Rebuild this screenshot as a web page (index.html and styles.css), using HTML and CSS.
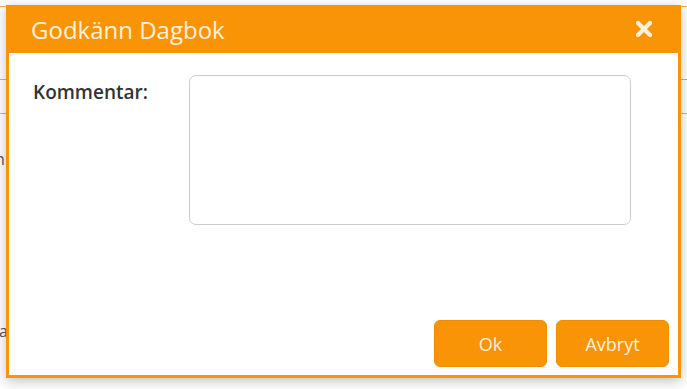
FILE: index.html
```html
<!DOCTYPE html>
<html lang="sv">
<head>
    <meta charset="UTF-8">
    <title>Godkänn Dagbok</title>
    <link rel="stylesheet" href="styles.css">
</head>
<body>
    <!-- Page behind the dialog -->
    <div class="page">
        <div class="page-top"></div>
        <div class="page-row tall"></div>
        <div class="page-row"></div>
        <div class="page-text first">Ordination</div>
        <div class="page-text second">Kommentera</div>
    </div>

    <!-- Dialog -->
    <div class="modal">
        <div class="modal-header">
            <h3>Godkänn Dagbok</h3>
            <svg class="close" width="16" height="16" viewBox="0 0 16 16">
                <path d="M2 2 L14 14 M14 2 L2 14" stroke="#fff0dc" stroke-width="4.2" stroke-linecap="square"/>
            </svg>
        </div>
        <div class="modal-body">
            <label for="comment">Kommentar:</label>
            <textarea id="comment"></textarea>
        </div>
        <div class="modal-footer">
            <button class="btn">Ok</button>
            <button class="btn">Avbryt</button>
        </div>
    </div>
</body>
</html>
```

FILE: styles.css
```css
/*Fonts*/
body {
    margin: 0;
    font-family: "Open Sans", "Liberation Sans", sans-serif;
    background: #ffffff;
    color: #333333;
    width: 687px;
    height: 389px;
    overflow: hidden;
    position: relative;
}
.page {
    width: 100%;
}
.page-top {
    height: 6px;
    border-bottom: 1px solid #f5a94a;
}
.page-row {
    border-bottom: 1px solid #f5a94a;
    height: 33px;
}
.page-row.tall {
    height: 72px;
}
.page-text {
    font-size: 16px;
    color: #555555;
    text-indent: -76px;
}
.page-text.first {
    margin-top: 34px;
}
.page-text.second {
    margin-top: 150px;
    text-indent: -90px;
}

.modal {
    position: absolute;
    top: 5px;
    left: 6px;
    width: 675px;
    height: 373px;
    box-sizing: border-box;
    border: 3px solid #f89406;
    border-top: none;
    background: #ffffff;
    box-shadow: 0 3px 12px rgba(0, 0, 0, 0.25);
    display: flex;
    flex-direction: column;
}
.modal-header {
    background: #f89406;
    height: 48px;
    margin: 0 -3px;
    padding: 0 29px 0 25px;
    display: flex;
    align-items: center;
    justify-content: space-between;
}
.modal-header h3 {
    margin: 0;
    font-weight: 400;
    font-size: 24px;
    color: #fff0dc;
}
.close {
    display: block;
    cursor: pointer;
}
.modal-body {
    flex: 1;
    display: flex;
    padding: 22px 0 0 24px;
}
.modal-body label {
    width: 156px;
    font-size: 19px;
    font-weight: 600;
    padding-top: 4px;
    color: #333333;
}
.modal-body textarea {
    width: 442px;
    height: 150px;
    box-sizing: border-box;
    border: 1px solid #cccccc;
    border-radius: 7px;
    resize: none;
    outline: none;
}
.modal-footer {
    display: flex;
    justify-content: flex-end;
    gap: 9px;
    padding: 0 9px 8px 0;
}
.btn {
    width: 113px;
    height: 47px;
    background: #f89406;
    border: 1px solid #f08c00;
    border-radius: 6px;
    color: #fff0dc;
    font-family: "Open Sans", "Liberation Sans", sans-serif;
    font-size: 18px;
    cursor: pointer;
}
```
